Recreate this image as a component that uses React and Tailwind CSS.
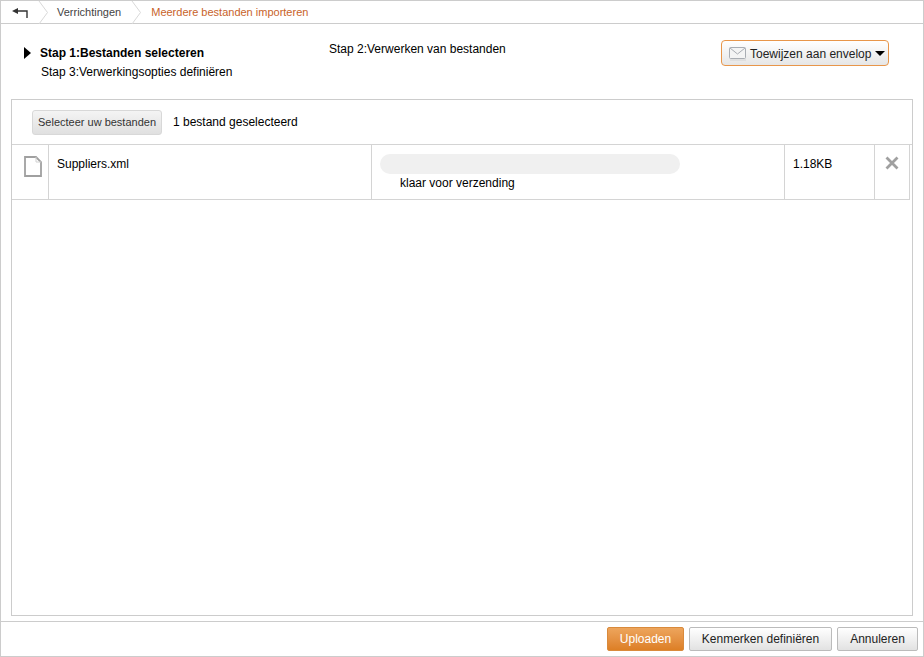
function Chevron() {
  return (
    <svg width="14" height="23" viewBox="0 0 14 23" className="shrink-0" fill="none">
      <path d="M1 0 L9.5 11.5 L1 23" stroke="#d8d8d8" strokeWidth="1" />
    </svg>
  );
}

function BackIcon() {
  return (
    <svg width="16" height="12" viewBox="0 0 16 12" fill="none">
      <path d="M0 5 L6 2 V8 Z" fill="#333" />
      <path d="M4 5 H15 V12" stroke="#333" strokeWidth="1.4" />
    </svg>
  );
}

function FileIcon() {
  return (
    <svg width="18" height="21" viewBox="0 0 18 21" fill="none">
      <path d="M1 1 H12 L17 6 V20 H1 Z" fill="#fff" stroke="#a0a0a0" strokeWidth="1.8" />
      <path d="M12 1 V6 H17" stroke="#d0d0d0" strokeWidth="1" />
    </svg>
  );
}

function EnvelopeIcon() {
  return (
    <svg width="18" height="14" viewBox="0 0 18 14" fill="none">
      <rect x="0.5" y="0.5" width="16" height="11" rx="1" fill="#f4f4f4" stroke="#a9adb3" />
      <path d="M1 1 L8.5 7 L16 1" stroke="#a9adb3" />
      <path d="M1 13 H17" stroke="#d4d4d4" />
    </svg>
  );
}

export default function App() {
  return (
    <div className="flex h-[657px] w-[924px] flex-col border border-[#ccc] bg-white font-['Liberation_Sans',Arial,sans-serif] text-xs text-black">
      {/* breadcrumb */}
      <div className="flex h-[23px] shrink-0 items-center border-b border-[#ccc] bg-white">
        <div className="flex w-[37px] justify-center pl-[1px]">
          <BackIcon />
        </div>
        <Chevron />
        <span className="ml-[5px] text-[11px] text-[#444]">Verrichtingen</span>
        <span className="ml-[10px]"><Chevron /></span>
        <span className="ml-[6px] text-[11px] text-[#c8622a]">Meerdere bestanden importeren</span>
      </div>

      {/* steps */}
      <div className="relative flex h-[75px] shrink-0 pl-[23px]">
        <div className="flex w-[305px] flex-col pt-[21px]">
          <div className="flex h-[15px] items-center">
            <span className="h-0 w-0 border-y-[6px] border-l-[7px] border-y-transparent border-l-black" />
            <span className="ml-[9px] font-bold">Stap 1:Bestanden selecteren</span>
          </div>
          <div className="mt-[4px] pl-[17px]">Stap 3:Verwerkingsopties definiëren</div>
        </div>
        <div className="pt-[17px]">Stap 2:Verwerken van bestanden</div>
        <button className="absolute right-[34px] top-[16px] flex h-[26px] w-[168px] items-center rounded-[4px] border border-[#e8964a] bg-gradient-to-b from-white to-[#e6e6e6] pl-[7px] pt-[1px] text-[#222]">
          <EnvelopeIcon />
          <span className="ml-[3px] whitespace-nowrap">Toewijzen aan envelop</span>
          <span className="ml-[4px] h-0 w-0 border-x-[5px] border-t-[5px] border-x-transparent border-t-black" />
        </button>
      </div>

      {/* panel */}
      <div className="mx-[10px] flex min-h-0 flex-1 flex-col border border-[#ccc]">
        <div className="flex h-[45px] shrink-0 items-center border-b border-[#d4d4d4] pl-[20px]">
          <button className="h-[25px] w-[130px] rounded-[3px] border border-[#d8d8d8] bg-gradient-to-b from-[#f4f4f4] to-[#e0e0e0] text-[11px] text-[#333]">
            Selecteer uw bestanden
          </button>
          <span className="ml-[11px]">1 bestand geselecteerd</span>
        </div>
        <div className="mr-[2px] flex h-[55px] shrink-0 border-b border-[#d4d4d4]">
          <div className="flex w-[37px] justify-center border-r border-[#d4d4d4] pl-[5px] pt-[11px]">
            <FileIcon />
          </div>
          <div className="w-[323px] border-r border-[#d4d4d4] pl-[8px] pt-[11px]">Suppliers.xml</div>
          <div className="w-[413px] border-r border-[#d4d4d4] pl-[8px] pt-[9px]">
            <div className="h-[20px] w-[300px] rounded-full bg-[#f0f0f0]" />
            <div className="mt-[1px] pl-[20px]">klaar voor verzending</div>
          </div>
          <div className="w-[90px] border-r border-[#d4d4d4] pl-[8px] pt-[11px]">1.18KB</div>
          <div className="flex flex-1 justify-center border-r border-[#d4d4d4] pt-[11px]">
            <svg width="14" height="14" viewBox="0 0 14 14" fill="none">
              <path d="M1.5 1.5 L12.5 12.5 M12.5 1.5 L1.5 12.5" stroke="#a0a0a0" strokeWidth="2.8" />
            </svg>
          </div>
        </div>
      </div>

      {/* footer */}
      <div className="mt-[5px] flex h-[35px] shrink-0 items-center justify-end gap-[5px] border-t border-[#ccc] pr-[5px]">
        <button className="h-[24px] w-[77px] rounded-[2px] border border-[#d98a3c] bg-gradient-to-b from-[#eda55c] to-[#dd7f24] text-white">
          Uploaden
        </button>
        <button className="h-[24px] w-[143px] rounded-[2px] border border-[#bbb] bg-gradient-to-b from-white to-[#e2e2e2] text-[#222]">
          Kenmerken definiëren
        </button>
        <button className="h-[24px] w-[81px] rounded-[2px] border border-[#bbb] bg-gradient-to-b from-white to-[#e2e2e2] text-[#222]">
          Annuleren
        </button>
      </div>
    </div>
  );
}
